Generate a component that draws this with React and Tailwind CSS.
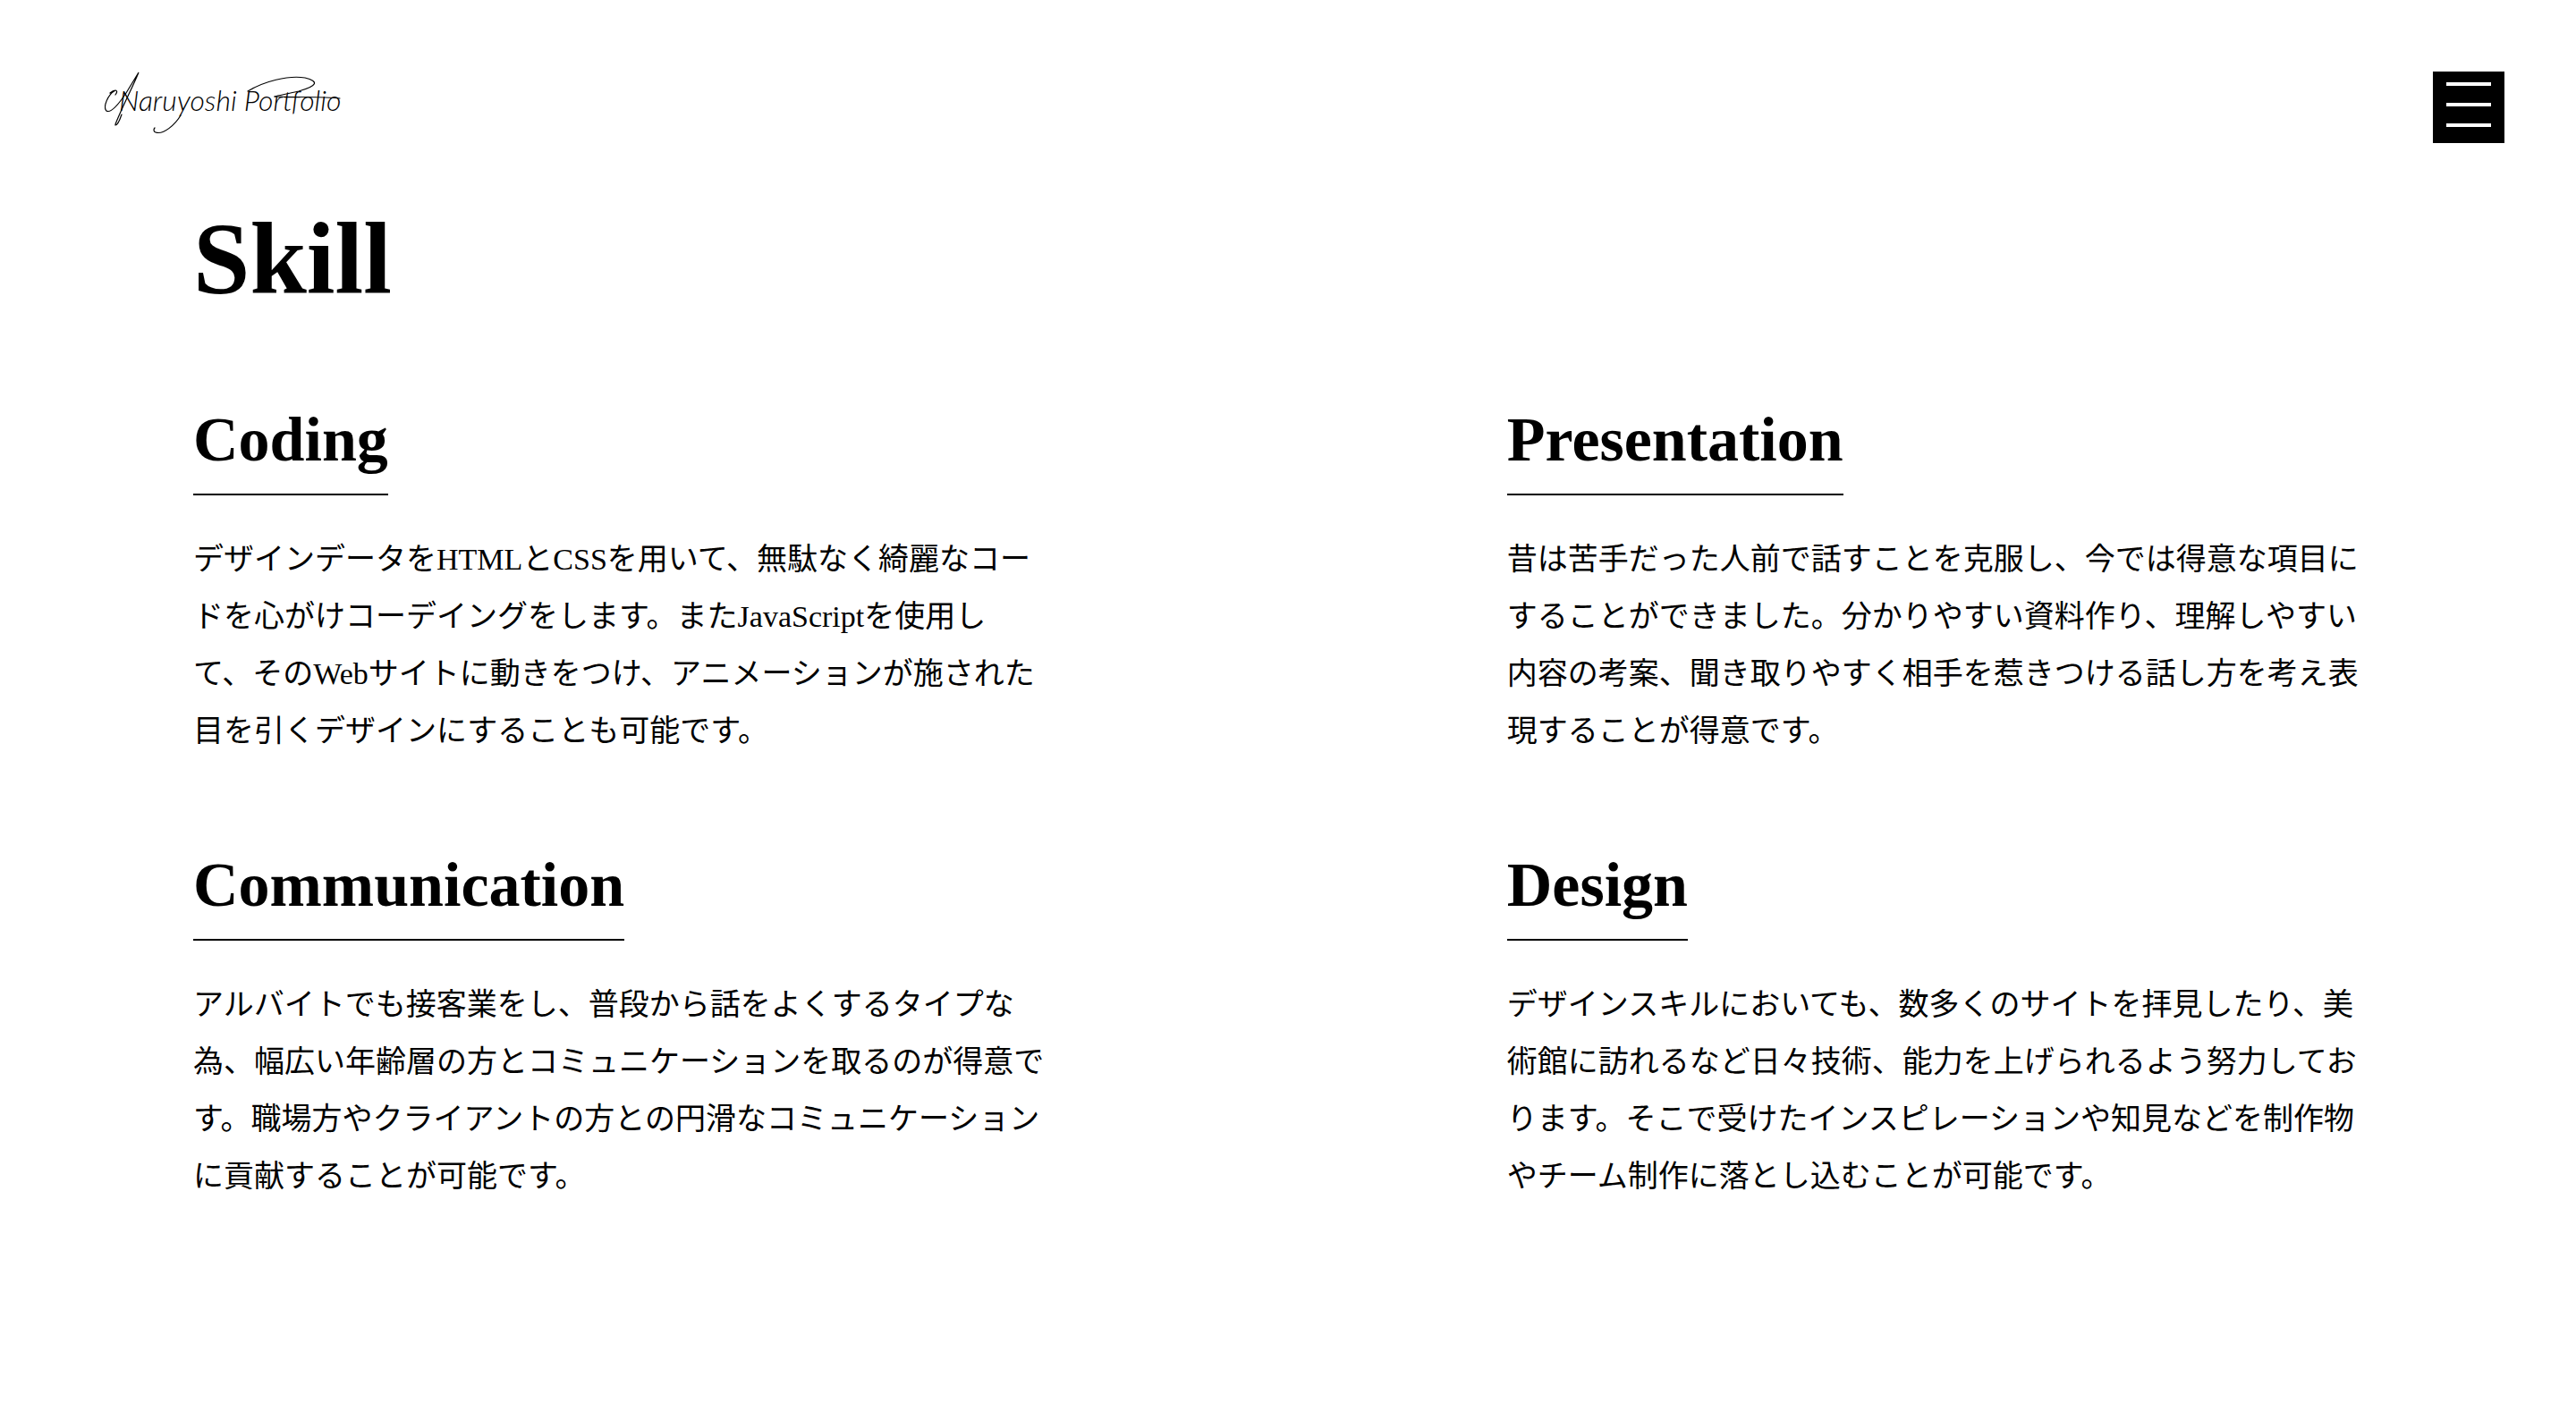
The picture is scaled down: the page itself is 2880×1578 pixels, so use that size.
const skills = [
  {
    title: "Coding",
    body: "デザインデータをHTMLとCSSを用いて、無駄なく綺麗なコードを心がけコーデイングをします。またJavaScriptを使用し\nて、そのWebサイトに動きをつけ、アニメーションが施された目を引くデザインにすることも可能です。",
  },
  {
    title: "Presentation",
    body: "昔は苦手だった人前で話すことを克服し、今では得意な項目にすることができました。分かりやすい資料作り、理解しやすい内容の考案、聞き取りやすく相手を惹きつける話し方を考え表現することが得意です。",
  },
  {
    title: "Communication",
    body: "アルバイトでも接客業をし、普段から話をよくするタイプな為、幅広い年齢層の方とコミュニケーションを取るのが得意です。職場方やクライアントの方との円滑なコミュニケーションに貢献することが可能です。",
  },
  {
    title: "Design",
    body: "デザインスキルにおいても、数多くのサイトを拝見したり、美術館に訪れるなど日々技術、能力を上げられるよう努力しております。そこで受けたインスピレーションや知見などを制作物やチーム制作に落とし込むことが可能です。",
  },
];

function Logo() {
  return (
    <a
      href="#top"
      className="relative block pl-4 pt-3 font-['Lato','Liberation_Sans',sans-serif] text-[32px] leading-10 font-light italic whitespace-nowrap"
    >
      Naruyoshi Portfolio
      {/* Pen flourishes around the signature */}
      <svg
        className="absolute left-0 top-0 h-[72px] w-[268px]"
        viewBox="0 0 268 72"
        fill="none"
        stroke="currentColor"
        strokeLinecap="round"
        aria-hidden="true"
      >
        <path d="M6 24C12 19 16 21 12 26M12 21C3 26-2 40 2 44C7 47 16 36 24 24L38 1C32 16 19 41 12 59L12 60C14 60 17 54 19 48" strokeWidth="1.2" />
        <path d="M85 49C79 59 66 71 57 68C54 67 55 64 56 63" strokeWidth="1.2" />
        <path d="M160 22C178 11 205 4 224 7C240 11 238 16 217 22C204 25 193 27 190 28" strokeWidth="1.2" />
        <path d="M190 28C215 29 242 28 263 30" strokeWidth="1" />
      </svg>
    </a>
  );
}

function MenuButton() {
  return (
    <button
      type="button"
      aria-label="Menu"
      className="flex size-20 flex-col items-center gap-[19px] bg-black pt-3"
    >
      <span className="h-1 w-[50px] bg-white" />
      <span className="h-1 w-[50px] bg-white" />
      <span className="h-1 w-[50px] bg-white" />
    </button>
  );
}

function Skill({ title, body }) {
  return (
    <section>
      <h2 className="inline-block border-b-2 border-black pb-[19px] align-top text-[70px] leading-[82px] font-bold">
        {title}
      </h2>
      <p className="mt-10 pr-6 text-[34px] leading-[64px] whitespace-pre-line">{body}</p>
    </section>
  );
}

export default function App() {
  return (
    <div
      id="top"
      lang="ja"
      className="min-h-screen bg-white font-['Liberation_Serif','Noto_Sans_CJK_JP',serif] text-black"
    >
      <header className="flex items-start justify-between pt-20 pr-20 pl-[117px]">
        <Logo />
        <MenuButton />
      </header>
      <main className="mx-auto w-[85%] pt-[74px] pb-20">
        <h1 className="text-[114px] leading-[112px] font-bold">Skill</h1>
        <div className="mt-[105px] grid grid-cols-[40%_40%] justify-between gap-y-[99px]">
          {skills.map((skill) => (
            <Skill key={skill.title} {...skill} />
          ))}
        </div>
      </main>
    </div>
  );
}
